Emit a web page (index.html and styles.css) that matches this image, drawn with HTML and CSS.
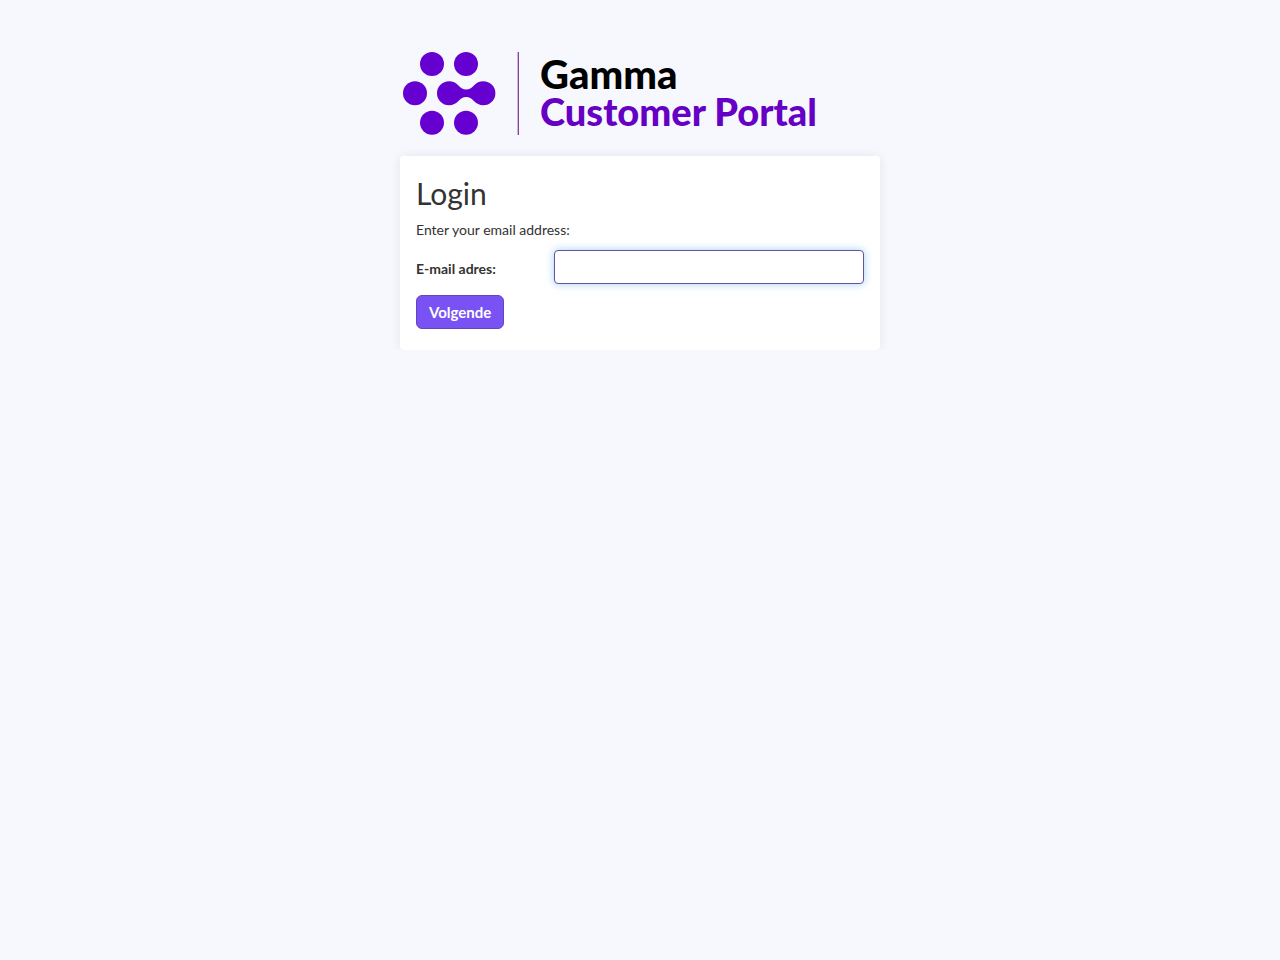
FILE: index.html
```html
<!DOCTYPE html>
<html lang="nl">
<head>
<meta charset="utf-8">
<meta name="viewport" content="width=device-width, initial-scale=1">
<title>Login</title>
<link rel="stylesheet" href="styles.css">
</head>
<body>
<div class="page">
  <header class="brand">
    <svg class="brand-mark" viewBox="0 0 120 84" width="120" height="84" aria-hidden="true">
      <g fill="#6500d0">
        <circle cx="32" cy="12" r="12"/>
        <circle cx="66" cy="12" r="12"/>
        <circle cx="15" cy="41.200" r="12"/>
        <circle cx="32" cy="70.800" r="12"/>
        <circle cx="66" cy="70.800" r="12"/>
        <path d="M49 29.200c4 0 7 1.600 9.500 4.200c2.500 2.600 4.500 4 7.700 4s5.200-1.400 7.700-4c2.500-2.600 5.500-4.200 9.500-4.200a12 12 0 0 1 0 24c-4 0-7-1.600-9.500-4.200c-2.500-2.600-4.500-4-7.700-4s-5.200 1.400-7.700 4c-2.500 2.600-5.500 4.200-9.500 4.200a12 12 0 0 1 0-24z"/>
      </g>
      <path d="M118.300 0v83" stroke="#803a9c" stroke-width="1.300"/>
    </svg>
    <div class="brand-text">
      <span class="brand-name">Gamma</span>
      <span class="brand-product">Customer Portal</span>
    </div>
  </header>
  <main class="card">
    <h1 class="title">Login</h1>
    <p class="intro">Enter your email address:</p>
    <form class="form">
      <div class="field">
        <label class="label" for="email">E-mail adres:</label>
        <input class="input" id="email" name="email" type="email">
      </div>
      <button class="button" type="submit">Volgende</button>
    </form>
  </main>
</div>
</body>
</html>
```
FILE: styles.css
```css
* {
  box-sizing: border-box;
}

body {
  margin: 0;
  background: #f7f8fd;
  color: #333;
  font: 14px/20px Lato, sans-serif;
}

.page {
  max-width: 480px;
  margin: 0 auto;
  padding-top: 52px;
}

.brand {
  display: flex;
  gap: 20px;
  margin-bottom: 20px;
}

.brand-mark {
  flex: none;
}

.brand-text {
  display: flex;
  flex-direction: column;
  padding-top: 3px;
  font-weight: 900;
  white-space: nowrap;
}

.brand-name {
  color: #000;
  font-size: 40px;
  line-height: 38px;
}

.brand-product {
  color: #6500c4;
  font-size: 38px;
  line-height: 36px;
}

.card {
  padding: 19px 16px 21px;
  border-radius: 4px;
  background: #fff;
  box-shadow: 0 0 12px rgba(0, 0, 0, 0.08);
}

.title {
  margin: 0 0 9px;
  font-size: 30px;
  line-height: 36px;
  font-weight: 400;
}

.intro {
  margin: 0 0 10px;
}

.field {
  display: grid;
  grid-template-columns: 4fr 9fr;
  align-items: center;
  margin-bottom: 11px;
}

.label {
  padding-top: 4px;
  font-weight: 700;
}

.input {
  width: 100%;
  height: 34px;
  padding: 6px 12px;
  border: 1px solid #6650a8;
  border-radius: 4px;
  outline: none;
  background: #fff;
  color: #333;
  font: inherit;
  box-shadow: 0 0 8px rgba(102, 175, 233, 0.6);
}

.button {
  height: 34px;
  padding: 0 12px;
  border: 1px solid #6544c4;
  border-radius: 6px;
  background: #7952f3;
  color: #fff;
  font: 700 15px/20px Lato, sans-serif;
}
```
